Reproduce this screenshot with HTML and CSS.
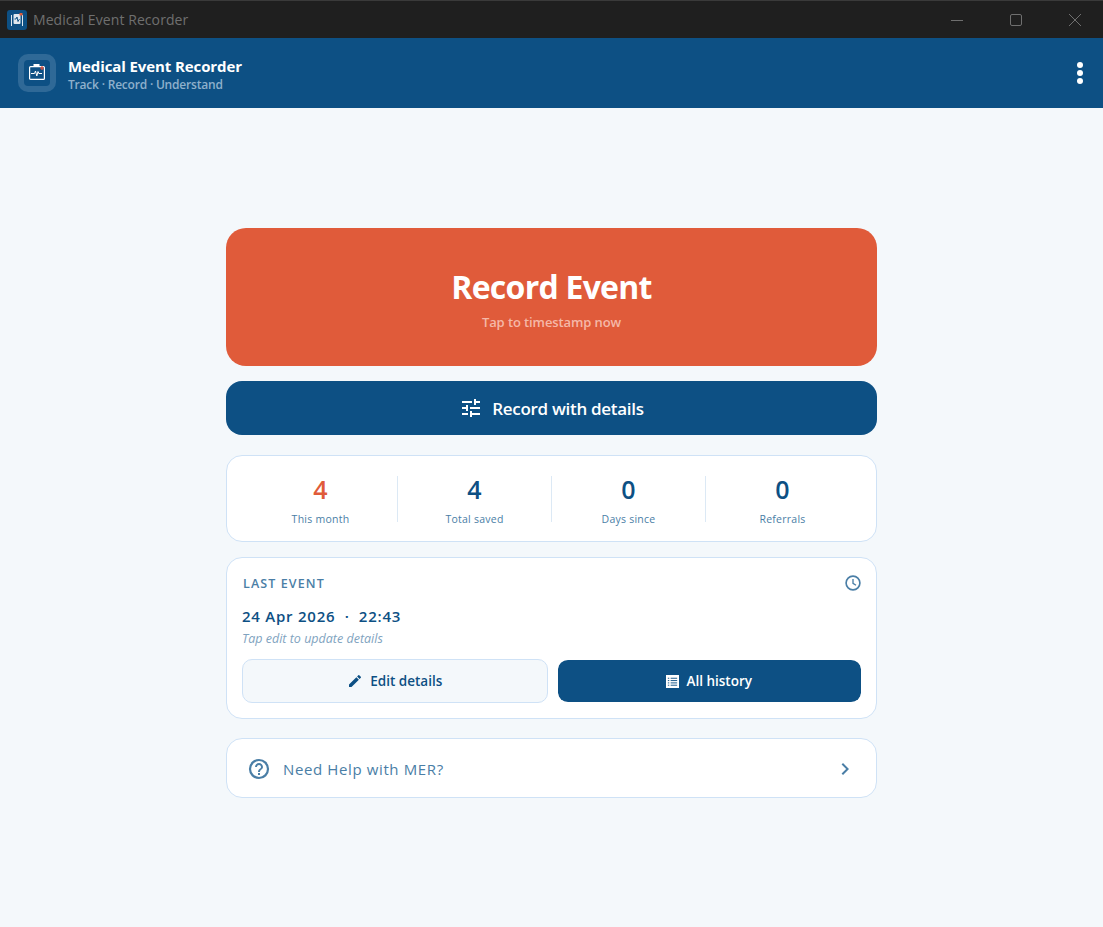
FILE: index.html
```html
<!DOCTYPE html>
<html lang="en">
<head>
<meta charset="utf-8">
<title>Medical Event Recorder</title>
<link rel="stylesheet" href="styles.css">
</head>
<body>
<div class="window">
  <div class="titlebar">
    <div class="title-left">
      <svg class="win-icon" viewBox="0 0 20 20"><rect width="20" height="20" rx="3" fill="#0d5084"/><path d="M4.500 5V16M15.500 5V16" stroke="#dfe8ef" stroke-width="1"/><rect x="6.500" y="4" width="7" height="10" rx="1" fill="#dfe8ef"/><path d="M7.500 9h1.500l1-2 1 4.500 1-2h.5" fill="none" stroke="#0d5084" stroke-width="1"/><rect x="12.500" y="3" width="3" height="2.500" fill="#e05b3a"/></svg>
      <span class="win-title">Medical Event Recorder</span>
    </div>
    <div class="win-controls">
      <svg class="win-ctl" viewBox="0 0 14 14"><path d="M1 7.500H13" stroke="#6f6f6f" stroke-width="1"/></svg>
      <svg class="win-ctl" viewBox="0 0 14 14"><rect x="1.500" y="1.500" width="11" height="11" rx="1.500" fill="none" stroke="#6f6f6f" stroke-width="1"/></svg>
      <svg class="win-ctl" viewBox="0 0 14 14"><path d="M1 1L13 13M13 1L1 13" stroke="#6f6f6f" stroke-width="1"/></svg>
    </div>
  </div>
  <header class="appbar">
    <div class="brand">
      <div class="logo">
        <div class="logo-inner">
          <svg viewBox="0 0 20 20" width="20" height="20"><rect x="2.600" y="3.600" width="14.800" height="12.800" rx="1" fill="none" stroke="#fff" stroke-width="1.200"/><rect x="6.500" y="1" width="6" height="2.500" fill="#fff"/><path d="M4 10.500h3.500l1-2.500 1.300 5 1.200-4.500.8 2h3.200" fill="none" stroke="#fff" stroke-width="1"/><path d="M15 3v4M13 5h4" stroke="#e8523a" stroke-width="1.200"/></svg>
        </div>
      </div>
      <div class="brand-text">
        <div class="brand-name">Medical Event Recorder</div>
        <div class="brand-sub">Track · Record · Understand</div>
      </div>
    </div>
    <div class="dots"><i></i><i></i><i></i></div>
  </header>
  <main class="main">
    <div class="column">
      <button class="record">
        <span class="record-title">Record Event</span>
        <span class="record-sub">Tap to timestamp now</span>
      </button>
      <button class="details">
        <svg viewBox="0 0 24 24" width="24" height="24"><path fill="#fff" d="M3 17v2h6v-2H3zM3 5v2h10V5H3zm10 16v-2h8v-2h-8v-2h-2v6h2zM7 9v2H3v2h4v2h2V9H7zm14 4v-2H11v2h10zm-6-4h2V7h4V5h-4V3h-2v6z"/></svg>
        <span>Record with details</span>
      </button>
      <section class="card stats">
        <div class="stat"><div class="num accent">4</div><div class="lbl">This month</div></div>
        <div class="stat"><div class="num">4</div><div class="lbl">Total saved</div></div>
        <div class="stat"><div class="num">0</div><div class="lbl">Days since</div></div>
        <div class="stat"><div class="num">0</div><div class="lbl">Referrals</div></div>
      </section>
      <section class="card last">
        <div class="last-head">
          <span class="last-label">LAST EVENT</span>
          <svg class="clock" viewBox="0 0 24 24" width="18" height="18"><circle cx="12" cy="12" r="9.200" fill="none" stroke="#4a7ea6" stroke-width="2.200"/><path d="M12 6.500V12.500L16 15" fill="none" stroke="#4a7ea6" stroke-width="1.800"/></svg>
        </div>
        <div class="last-date">24 Apr 2026 &nbsp;·&nbsp; 22:43</div>
        <div class="last-hint">Tap edit to update details</div>
        <div class="last-actions">
          <button class="btn btn-light">
            <svg viewBox="0 0 24 24" width="16" height="16"><path fill="#0d5084" d="M3 17.250V21h3.750L17.810 9.940l-3.750-3.750L3 17.250zM20.710 7.040a1 1 0 0 0 0-1.410l-2.340-2.340a1 1 0 0 0-1.410 0l-1.830 1.830 3.750 3.750 1.830-1.830z"/></svg>
            <span>Edit details</span>
          </button>
          <button class="btn btn-dark">
            <svg viewBox="0 0 14 14" width="13" height="13"><rect width="14" height="14" fill="#fff"/><path d="M2 3.500h1.500M5 3.500h7M2 6h1.500M5 6h7M2 8.500h1.500M5 8.500h7M2 11h1.500M5 11h7" stroke="#0d5084" stroke-width="1"/></svg>
            <span>All history</span>
          </button>
        </div>
      </section>
      <section class="card help">
        <svg viewBox="0 0 24 24" width="24" height="24"><circle cx="12" cy="12" r="9" fill="none" stroke="#4a7ea6" stroke-width="2.200"/><path fill="#4a7ea6" d="M11 18h2v-2h-2v2zM12 6c-2.210 0-4 1.790-4 4h2c0-1.100.9-2 2-2s2 .9 2 2c0 2-3 1.750-3 5h2c0-2.250 3-2.500 3-5 0-2.210-1.790-4-4-4z"/></svg>
        <span class="help-text">Need Help with MER?</span>
        <svg class="chev" viewBox="0 0 24 24" width="24" height="24"><path fill="#4a7ea6" d="M10 6L8.590 7.410 13.170 12l-4.580 4.590L10 18l6-6z"/></svg>
      </section>
    </div>
  </main>
</div>
</body>
</html>
```
FILE: styles.css
```css
* { box-sizing: border-box; }
html, body { margin: 0; padding: 0; height: 100%; }
body { font-family: "Open Sans", "Noto Sans", "Liberation Sans", sans-serif; background: #f4f8fb; overflow: hidden; }
button { font-family: inherit; cursor: pointer; }
.window { height: 927px; display: flex; flex-direction: column; }
.titlebar { height: 38px; flex: none; background: #1f1f1f; display: flex; justify-content: space-between; align-items: center; border-top: 1px solid #3a3a3a; }
.title-left { display: flex; align-items: center; gap: 6px; padding-left: 7px; }
.win-icon { width: 20px; height: 20px; }
.win-title { font-size: 14px; color: #6f6f6f; letter-spacing: .08px; }
.win-controls { display: flex; align-items: center; gap: 45px; padding-right: 21px; }
.win-ctl { width: 14px; height: 14px; display: block; }
.appbar { height: 70px; flex: none; background: #0d5084; display: flex; align-items: center; justify-content: space-between; padding: 0 20px 0 18px; }
.brand { display: flex; align-items: center; gap: 12px; }
.logo { width: 38px; height: 38px; border-radius: 10px; background: #2f6997; display: flex; align-items: center; justify-content: center; }
.logo-inner { width: 26px; height: 26px; border-radius: 4px; background: #0d5084; display: flex; align-items: center; justify-content: center; }
.brand-text { padding-top: 3px; }
.brand-name { font-size: 15px; font-weight: 700; line-height: 19px; color: #fff; letter-spacing: -.1px; }
.brand-sub { font-size: 12px; font-weight: 600; line-height: 16px; margin-top: 1px; color: #8fb0cc; letter-spacing: -.2px; }
.dots { display: flex; flex-direction: column; gap: 2px; }
.dots i { width: 6px; height: 6px; border-radius: 50%; background: #fff; display: block; }
.main { flex: 1; display: flex; justify-content: center; align-items: center; padding-bottom: 9px; }
.column { width: 651px; display: flex; flex-direction: column; }
.record { height: 138px; border: 0; border-radius: 20px; background: #e05b3a; color: #fff; display: flex; flex-direction: column; align-items: center; justify-content: center; padding: 2px 0 0; }
.record-title { font-size: 32px; font-weight: 700; line-height: 44px; letter-spacing: -.75px; }
.record-sub { font-size: 13px; font-weight: 600; line-height: 18px; color: #f5b8a8; letter-spacing: -.1px; margin-top: 4px; }
.details { height: 54px; margin-top: 15px; border: 0; border-radius: 16px; background: #0d5084; color: #fff; display: flex; align-items: center; justify-content: center; gap: 9px; font-size: 17px; font-weight: 600; letter-spacing: -.3px; padding: 0; }
.card { background: #fff; border: 1px solid #cfe2f6; border-radius: 16px; }
.stats { height: 87px; margin-top: 20px; display: flex; padding: 0 17px; align-items: center; }
.stat { flex: 1; height: 46px; text-align: center; border-right: 1px solid #dce9f5; }
.stat:last-child { border-right: 0; }
.num { font-size: 25px; font-weight: 600; line-height: 24px; margin-top: 1px; color: #0d5084; }
.num.accent { color: #e05b3a; }
.lbl { font-size: 10.500px; line-height: 14px; color: #4a7ea6; margin-top: 11px; letter-spacing: .25px; }
.last { height: 162px; margin-top: 15px; padding: 15px; display: flex; flex-direction: column; }
.last-head { display: flex; justify-content: space-between; align-items: center; height: 20px; padding-left: 1px; }
.clock { margin-right: -1px; }
.last-label { font-size: 12.500px; font-weight: 600; color: #4a7ea6; letter-spacing: 1.100px; }
.last-date { font-size: 15px; font-weight: 600; line-height: 20px; color: #0d5084; margin-top: 13px; letter-spacing: .76px; }
.last-hint { font-size: 12.500px; font-style: italic; line-height: 16px; color: #7fa3c0; margin-top: 5px; }
.last-actions { display: flex; gap: 10px; margin-top: 12px; }
.btn { flex: 1; height: 44px; border-radius: 10px; display: flex; align-items: center; justify-content: center; gap: 7px; font-size: 13.500px; font-weight: 600; padding: 0; }
.btn-light { background: #f4f8fb; border: 1px solid #cfe2f6; color: #0d5084; }
.btn-dark { background: #0d5084 padding-box; border-width: 1px 0; border-style: solid; border-color: transparent; color: #fff; }
.help { height: 60px; margin-top: 19px; display: flex; align-items: center; padding: 1px 19px 0 20px; gap: 12px; }
.help-text { flex: 1; font-size: 15px; color: #4a7ea6; letter-spacing: .62px; }
```
